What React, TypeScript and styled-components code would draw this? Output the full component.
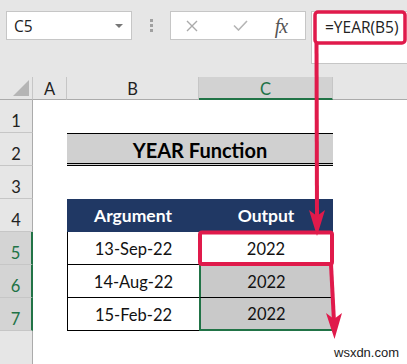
import React from 'react';
import styled, { createGlobalStyle, css } from 'styled-components';

const GlobalStyle = createGlobalStyle`
  html, body { margin: 0; padding: 0; }
  body { width: 407px; height: 364px; overflow: hidden; background: #ffffff; }
  * { box-sizing: border-box; }
`;

const GREEN = '#217346';
const RED = '#e01a4b';

const Page = styled.div`
  position: relative;
  width: 407px;
  height: 364px;
  overflow: hidden;
  display: flex;
  flex-direction: column;
  background: #ffffff;
`;

const FormulaBar = styled.div`
  flex: none;
  height: 77px;
  background: #e6e6e6;
  padding: 11px 0 0 6px;
  display: flex;
  align-items: flex-start;
  font-family: "Open Sans", "Noto Sans", sans-serif;
`;

const NameBox = styled.div`
  width: 126px;
  height: 29px;
  background: #ffffff;
  border: 1px solid #c6c6c6;
  display: flex;
  align-items: center;
  justify-content: space-between;
  padding: 0 8px 0 7px;
  font-size: 15.5px;
  color: #222;
`;

const Caret = styled.span`
  width: 0;
  height: 0;
  border-left: 4px solid transparent;
  border-right: 4px solid transparent;
  border-top: 4px solid #777;
`;

const Grip = styled.div`
  width: 38px;
  height: 29px;
  display: flex;
  flex-direction: column;
  align-items: center;
  justify-content: center;
  gap: 2px;
`;

const GripDot = styled.span`
  width: 3px;
  height: 3px;
  background: #a0a0a0;
`;

const ButtonsBox = styled.div`
  width: 136px;
  height: 29px;
  background: #ffffff;
  border: 1px solid #c6c6c6;
  display: grid;
  grid-template-columns: 41px 56px 26px;
  align-items: center;
  justify-items: center;
`;

const FxGlyph = styled.span`
  font-family: "Liberation Serif", "DejaVu Serif", serif;
  font-style: italic;
  font-size: 20px;
  color: #555;
  line-height: 1;
  letter-spacing: -1px;
`;

const FormulaBox = styled.div`
  margin-left: 5px;
  flex: 1;
  height: 53px;
  background: #ffffff;
  border: 1px solid #c6c6c6;
  border-right: none;
  padding: 5px 0 0 13px;
  font-size: 15.5px;
  line-height: 20px;
  color: #222;
  white-space: nowrap;
`;

const Sheet = styled.div`
  flex: 1;
  display: grid;
  grid-template-columns: 33px 34px 132px 134px 1fr;
  grid-template-rows: 23px repeat(7, 33px) 1fr;
  font-family: Lato, "Liberation Sans", sans-serif;
`;

const Corner = styled.div`
  background: #e6e6e6;
  border-right: 1px solid #c6c6c6;
  border-bottom: 1px solid #ababab;
  display: flex;
  align-items: flex-end;
  justify-content: flex-end;
  padding: 0 3px 3px 0;
  &::after {
    content: '';
    width: 0;
    height: 0;
    border-left: 16px solid transparent;
    border-bottom: 16px solid #b5b5b5;
  }
`;

const ColHeader = styled.div<{ $selected?: boolean }>`
  background: #e6e6e6;
  border-right: 1px solid #c6c6c6;
  border-bottom: 1px solid #ababab;
  display: flex;
  align-items: center;
  justify-content: center;
  font-size: 16.5px;
  color: #222;
  padding-top: 2px;
  ${(p) =>
    p.$selected &&
    css`
      background: #d2d2d2;
      color: ${GREEN};
      border-bottom: 2px solid ${GREEN};
    `}
`;

const ColHeaderEnd = styled.div`
  background: #e6e6e6;
  border-bottom: 1px solid #ababab;
`;

const RowHeader = styled.div<{ $selected?: boolean }>`
  background: #e6e6e6;
  border-right: 1px solid #ababab;
  border-bottom: 1px solid #c6c6c6;
  display: flex;
  align-items: flex-end;
  justify-content: center;
  padding-bottom: 3px;
  font-size: 16.5px;
  line-height: 16px;
  color: #222;
  ${(p) =>
    p.$selected &&
    css`
      background: #d4d4d4;
      color: ${GREEN};
      border-right: 2px solid ${GREEN};
    `}
`;

const FillerHeader = styled.div`
  background: #e6e6e6;
  border-right: 1px solid #ababab;
`;

const Blank = styled.div`
  background: #ffffff;
`;

const TitleCell = styled.div`
  grid-column: span 2;
  background: #d0d0d0;
  border-top: 1px solid #000;
  border-bottom: 3px double #000;
  display: flex;
  align-items: center;
  justify-content: center;
  font-weight: 700;
  font-size: 20px;
  color: #000;
  padding-top: 2px;
`;

const HeadCell = styled.div`
  background: #203864;
  display: flex;
  align-items: center;
  justify-content: center;
  font-weight: 700;
  font-size: 17.5px;
  color: #ffffff;
`;

const DataCell = styled.div<{ $col: 'B' | 'C'; $gray?: boolean; $selLeft?: boolean; $selBottom?: boolean }>`
  background: ${(p) => (p.$gray ? '#c9c9c9' : '#ffffff')};
  border-left: ${(p) => (p.$selLeft ? `2px solid ${GREEN}` : '1px solid #000')};
  border-bottom: ${(p) => (p.$selBottom ? `2px solid ${GREEN}` : '1px solid #000')};
  border-right: ${(p) => (p.$col === 'C' ? '1px solid #000' : 'none')};
  display: flex;
  align-items: center;
  justify-content: center;
  font-size: 16.5px;
  color: #111;
  padding-top: 1px;
`;

const Overlay = styled.svg`
  position: absolute;
  left: 0;
  top: 0;
  width: 407px;
  height: 364px;
  pointer-events: none;
`;

const Watermark = styled.span`
  position: absolute;
  left: 334px;
  top: 345px;
  font-family: "Liberation Sans", Arial, sans-serif;
  font-size: 13px;
  color: #222;
`;

const rows = [
  { arg: '13-Sep-22', out: '2022' },
  { arg: '14-Aug-22', out: '2022' },
  { arg: '15-Feb-22', out: '2022' },
];

export default function App() {
  return (
    <Page>
      <GlobalStyle />
      <FormulaBar>
        <NameBox>
          <span>C5</span>
          <Caret />
        </NameBox>
        <Grip>
          <GripDot />
          <GripDot />
          <GripDot />
        </Grip>
        <ButtonsBox>
          <svg width="12" height="12" viewBox="0 0 12 12">
            <path d="M1 1 L11 11 M11 1 L1 11" stroke="#aaaaaa" strokeWidth="1.4" fill="none" />
          </svg>
          <svg width="15" height="11" viewBox="0 0 15 11">
            <path d="M1 5.5 L5.5 10 L14 1" stroke="#b5b5b5" strokeWidth="1.6" fill="none" />
          </svg>
          <FxGlyph>fx</FxGlyph>
        </ButtonsBox>
        <FormulaBox>=YEAR(B5)</FormulaBox>
      </FormulaBar>

      <Sheet>
        <Corner />
        <ColHeader>A</ColHeader>
        <ColHeader>B</ColHeader>
        <ColHeader $selected>C</ColHeader>
        <ColHeaderEnd />

        <RowHeader>1</RowHeader>
        <Blank />
        <Blank />
        <Blank />
        <Blank />

        <RowHeader>2</RowHeader>
        <Blank />
        <TitleCell>YEAR Function</TitleCell>
        <Blank />

        <RowHeader>3</RowHeader>
        <Blank />
        <Blank />
        <Blank />
        <Blank />

        <RowHeader>4</RowHeader>
        <Blank />
        <HeadCell>Argument</HeadCell>
        <HeadCell>Output</HeadCell>
        <Blank />

        {rows.map((r, i) => (
          <React.Fragment key={r.arg}>
            <RowHeader $selected>{5 + i}</RowHeader>
            <Blank />
            <DataCell $col="B">{r.arg}</DataCell>
            <DataCell $col="C" $gray={i > 0} $selLeft={i > 0} $selBottom={i === 2}>
              {r.out}
            </DataCell>
            <Blank />
          </React.Fragment>
        ))}

        <FillerHeader />
        <Blank />
        <Blank />
        <Blank />
        <Blank />
      </Sheet>

      <Overlay viewBox="0 0 407 364">
        <rect x="315" y="12" width="90" height="31" rx="3" fill="none" stroke={RED} strokeWidth="3.5" />
        <path d="M316.5 43 L317 218" stroke={RED} strokeWidth="4" fill="none" />
        <path d="M317 236 L309 210 L317 216 L325 210 Z" fill={RED} />
        <rect x="200" y="232.5" width="132" height="31.5" rx="2" fill="none" stroke={RED} strokeWidth="4" />
        <path d="M331 264 L334 322" stroke={RED} strokeWidth="4" fill="none" />
        <path d="M334.5 339 L326 313 L334 319 L342 313 Z" fill={RED} />
      </Overlay>
      <Watermark>wsxdn.com</Watermark>
    </Page>
  );
}
